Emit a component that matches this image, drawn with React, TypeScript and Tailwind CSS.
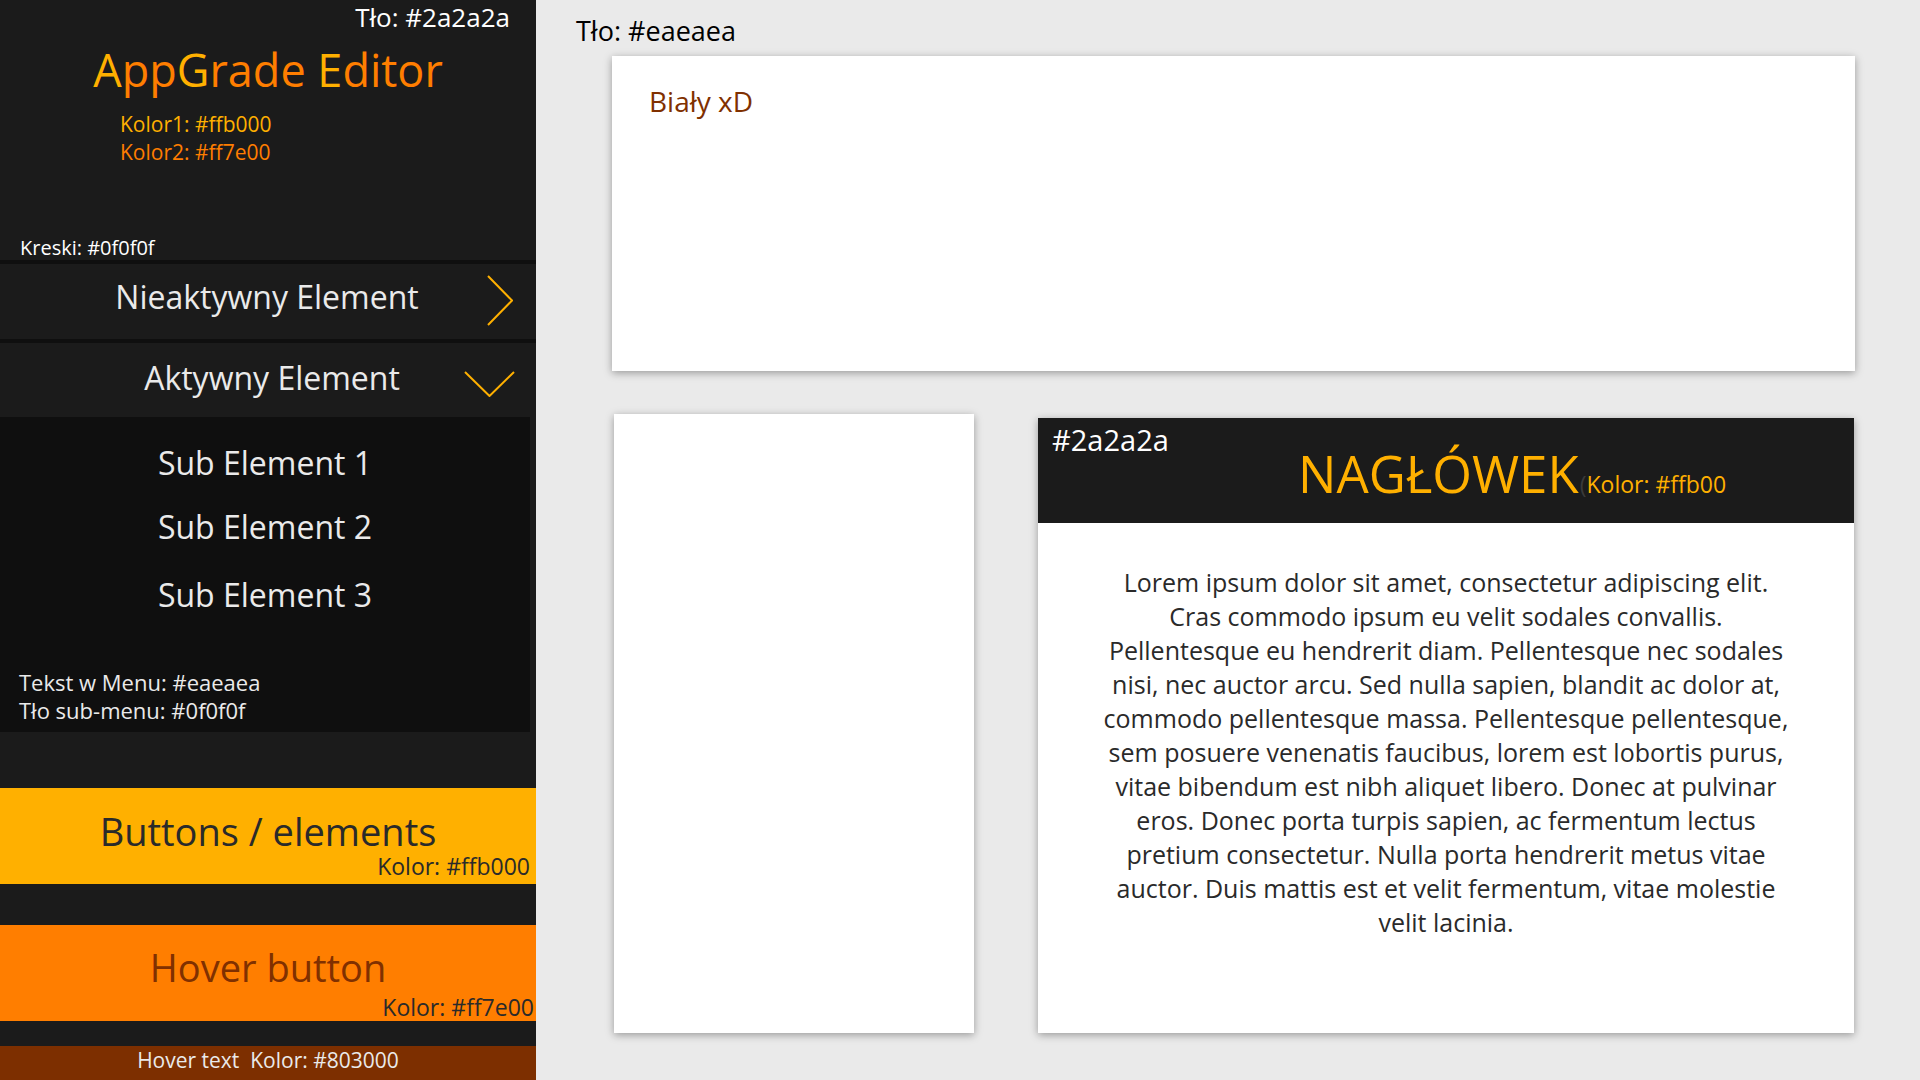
import React from "react";

const font = { fontFamily: '"Open Sans", "Noto Sans", sans-serif' };

const lorem = [
  "Lorem ipsum dolor sit amet, consectetur adipiscing elit.",
  "Cras commodo ipsum eu velit sodales convallis.",
  "Pellentesque eu hendrerit diam. Pellentesque nec sodales",
  "nisi, nec auctor arcu. Sed nulla sapien, blandit ac dolor at,",
  "commodo pellentesque massa. Pellentesque pellentesque,",
  "sem posuere venenatis faucibus, lorem est lobortis purus,",
  "vitae bibendum est nibh aliquet libero. Donec at pulvinar",
  "eros. Donec porta turpis sapien, ac fermentum lectus",
  "pretium consectetur. Nulla porta hendrerit metus vitae",
  "auctor. Duis mattis est et velit fermentum, vitae molestie",
  "velit lacinia.",
];

function ChevronRight() {
  return (
    <svg width="26" height="51" viewBox="0 0 26 51" fill="none">
      <polyline points="1,1 25,25.5 1,50" stroke="#ffb000" strokeWidth="2" />
    </svg>
  );
}

function ChevronDown() {
  return (
    <svg width="51" height="26" viewBox="0 0 51 26" fill="none">
      <polyline points="1,1 25.5,25 50,1" stroke="#ffb000" strokeWidth="2" />
    </svg>
  );
}

export default function App() {
  return (
    <div className="flex w-[1920px] h-[1080px] overflow-hidden bg-[#eaeaea]" style={font}>
      {/* Sidebar */}
      <div className="w-[536px] h-[1080px] shrink-0 flex flex-col bg-[#1b1b1b]">
        <div className="h-[260px] flex flex-col">
          <div className="mt-[4px] pr-[26px] text-right text-[26px] leading-none text-white">Tło: #2a2a2a</div>
          <div className="mt-[17px] text-center text-[45px] leading-none">
            <span className="text-[#ffb000]">A</span>
            <span className="text-[#ff7e00]">pp</span>
            <span className="text-[#ffb000]">G</span>
            <span className="text-[#ff7e00]">rade </span>
            <span className="text-[#ffb000]">E</span>
            <span className="text-[#ff7e00]">ditor</span>
          </div>
          <div className="mt-[22px] pl-[120px] text-[21px] leading-none text-[#ffb000]">Kolor1: #ffb000</div>
          <div className="mt-[7px] pl-[120px] text-[21px] leading-none text-[#ff7e00]">Kolor2: #ff7e00</div>
          <div className="mt-[75px] pl-[20px] text-[20px] leading-none text-white">Kreski: #0f0f0f</div>
        </div>
        <div className="h-[4px] bg-[#0f0f0f]" />
        <div className="h-[75px] flex">
          <div className="w-[47px]" />
          <div className="flex-1 pt-[17px] text-center text-[32px] leading-none text-[#eaeaea]">Nieaktywny Element</div>
          <div className="w-[49px] pt-[11px]">
            <ChevronRight />
          </div>
        </div>
        <div className="h-[4px] bg-[#0f0f0f]" />
        <div className="h-[74px] flex">
          <div className="w-[80px]" />
          <div className="flex-1 pt-[19px] text-center text-[32px] leading-none text-[#eaeaea]">Aktywny Element</div>
          <div className="w-[72px] pt-[28px]">
            <ChevronDown />
          </div>
        </div>
        <div className="w-[530px] h-[315px] bg-[#0f0f0f] flex flex-col">
          <div className="mt-[30px] text-center text-[32px] leading-none text-[#eaeaea]">Sub Element 1</div>
          <div className="mt-[32px] text-center text-[32px] leading-none text-[#eaeaea]">Sub Element 2</div>
          <div className="mt-[36px] text-center text-[32px] leading-none text-[#eaeaea]">Sub Element 3</div>
          <div className="mt-[57px] pl-[19px] text-[22px] leading-[28px] text-[#eaeaea]">
            <div>Tekst w Menu: #eaeaea</div>
            <div>Tło sub-menu: #0f0f0f</div>
          </div>
        </div>
        <div className="h-[56px]" />
        <div className="h-[96px] bg-[#ffb000] flex flex-col text-[#2a2a2a]">
          <div className="mt-[24px] text-center text-[38px] leading-none">Buttons / elements</div>
          <div className="mt-[5px] pr-[6px] text-right text-[23px] leading-none">Kolor: #ffb000</div>
        </div>
        <div className="h-[41px]" />
        <div className="h-[96px] bg-[#ff7e00] flex flex-col">
          <div className="mt-[23px] text-center text-[38px] leading-none text-[#803000]">Hover button</div>
          <div className="mt-[10px] pr-[2px] text-right text-[23px] leading-none text-[#2a2a2a]">Kolor: #ff7e00</div>
        </div>
        <div className="h-[25px]" />
        <div className="h-[34px] bg-[#7d2f00] pt-[4px] text-center text-[21px] leading-none whitespace-pre text-[#eaeaea]">Hover text  Kolor: #803000</div>
      </div>

      {/* Main */}
      <div className="flex-1 flex flex-col">
        <div className="mt-[17px] pl-[40px] text-[27px] leading-none text-black">Tło: #eaeaea</div>
        <div className="mt-[12px] ml-[76px] w-[1243px] h-[315px] bg-white shadow-[0_2px_8px_rgba(0,0,0,0.35)] pl-[37px] pt-[31px]">
          <div className="text-[28px] leading-none text-[#803000]">Biały xD</div>
        </div>
        <div className="mt-[43px] flex items-start">
          <div className="ml-[78px] w-[360px] h-[619px] bg-white shadow-[0_2px_8px_rgba(0,0,0,0.35)]" />
          <div className="ml-[64px] mt-[4px] w-[816px] h-[615px] bg-white shadow-[0_2px_8px_rgba(0,0,0,0.35)] flex flex-col">
            <div className="h-[105px] bg-[#1b1b1b] flex pl-[14px]">
              <div className="w-[246px] pt-[7px] text-[29px] leading-none text-white">#2a2a2a</div>
              <div className="pt-[30px] flex items-baseline text-[#ffb000]">
                <span className="text-[51px] leading-none">NAGŁÓWEK</span>
                <span className="ml-[1px] text-[23px] leading-none text-[#3a3a3a]">(</span>
                <span className="text-[23px] leading-none">Kolor: #ffb00</span>
              </div>
            </div>
            <div className="pt-[42px] text-center text-[25px] leading-[34px] text-[#2a2a2a]">
              {lorem.map((l, i) => (
                <div key={i} className="whitespace-nowrap">{l}</div>
              ))}
            </div>
          </div>
        </div>
      </div>
    </div>
  );
}
